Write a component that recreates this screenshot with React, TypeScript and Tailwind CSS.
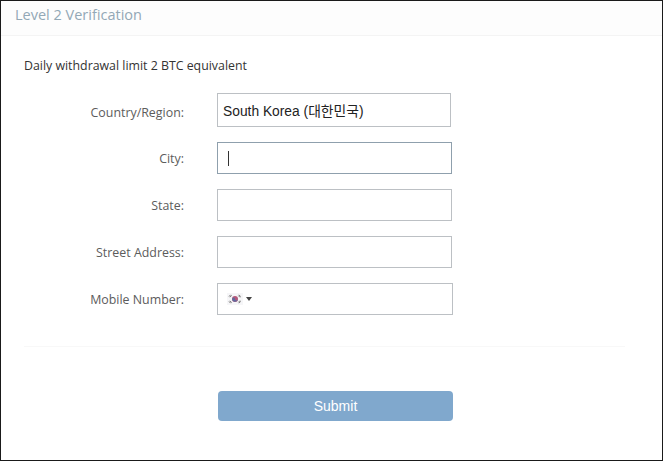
const labelClass = "w-[184px] shrink-0 pt-[2px] text-right text-[12.4px] text-[#5c5c5c] font-['Open_Sans','Noto_Sans',sans-serif]";

const KoreaFlag = () => (
    <svg width="16" height="12" viewBox="0 0 16 12" className="shrink-0">
        <rect width="16" height="12" fill="#f6f6f8" />
        <circle cx="8" cy="6" r="3" fill="#b5587a" />
        <path d="M5.2 6a1.4 1.4 0 0 1 2.8 0a1.4 1.4 0 0 0 2.8 0a2.8 2.8 0 0 1-5.6 0z" fill="#5f6a9f" />
        <g stroke="#777" strokeWidth="1">
            <path d="M2 3.6l1.6-1.8M3 4.2l1.6-1.8" />
            <path d="M12 1.8l1.6 1.8M11.4 2.6l1.6 1.8" />
            <path d="M2 8.4l1.6 1.8M3 7.8l1.6 1.8" />
            <path d="M12 10.2l1.6-1.8M11.4 9.4l1.6-1.8" />
        </g>
    </svg>
);

const Row = ({ label, labelOffset = "", className, children }: { label: string; labelOffset?: string; className: string; children?: React.ReactNode }) => (
    <div className="flex items-center">
        <div className={`${labelClass} ${labelOffset}`}>{label}</div>
        <div className={`ml-[33px] flex items-center border bg-white ${className}`}>{children}</div>
    </div>
);

export default function App() {
    return (
        <div className="h-[462px] w-[664px] overflow-hidden bg-white">
            <div className="flex h-[461px] w-[663px] flex-col border border-[#1a1a1a]">
                <div className="flex h-[35px] shrink-0 items-start border-b border-[#f4f4f4] bg-[#fdfdfd] pl-[14px]">
                    <h1 className="text-[14.5px] leading-[28px] text-[#93a8b6] font-['Open_Sans','Noto_Sans',sans-serif]">Level 2 Verification</h1>
                </div>
                <p className="mt-[21px] pl-[23px] text-[12.35px] leading-[18px] text-[#333] font-['Open_Sans','Noto_Sans',sans-serif]">
                    Daily withdrawal limit 2 BTC equivalent
                </p>
                <div className="-ml-px mt-[18px] flex flex-col gap-[15px]">
                    <Row label="Country/Region:" labelOffset="pt-[6px]" className="h-[34px] w-[234px] border-[#bcc0c4] pl-[5px]">
                        <span className="pt-[5px] text-[13.8px] text-[#222] font-['Liberation_Sans','Noto_Sans_CJK_KR',sans-serif]">South Korea (대한민국)</span>
                    </Row>
                    <Row label="City:" className="h-[32px] w-[235px] border-[#8fa0ad] pl-[10px]">
                        <div className="h-[15px] w-px bg-[#333]" />
                    </Row>
                    <Row label="State:" className="h-[32px] w-[235px] border-[#bcc0c4]" />
                    <Row label="Street Address:" className="h-[32px] w-[235px] border-[#bcc0c4]" />
                    <Row label="Mobile Number:" className="h-[32px] w-[236px] border-[#bcc0c4] pl-[9px]">
                        <KoreaFlag />
                        <div className="ml-[3px] h-0 w-0 border-x-[3px] border-t-[4px] border-x-transparent border-t-[#444]" />
                    </Row>
                </div>
                <div className="ml-[23px] mt-[31px] h-px w-[601px] bg-[#f8f8f8]" />
                <button className="ml-[217px] mt-[44px] h-[30px] w-[235px] rounded-[4px] bg-[#80a8cd] text-[14px] text-white font-['Liberation_Sans',sans-serif]">
                    Submit
                </button>
            </div>
        </div>
    );
}
